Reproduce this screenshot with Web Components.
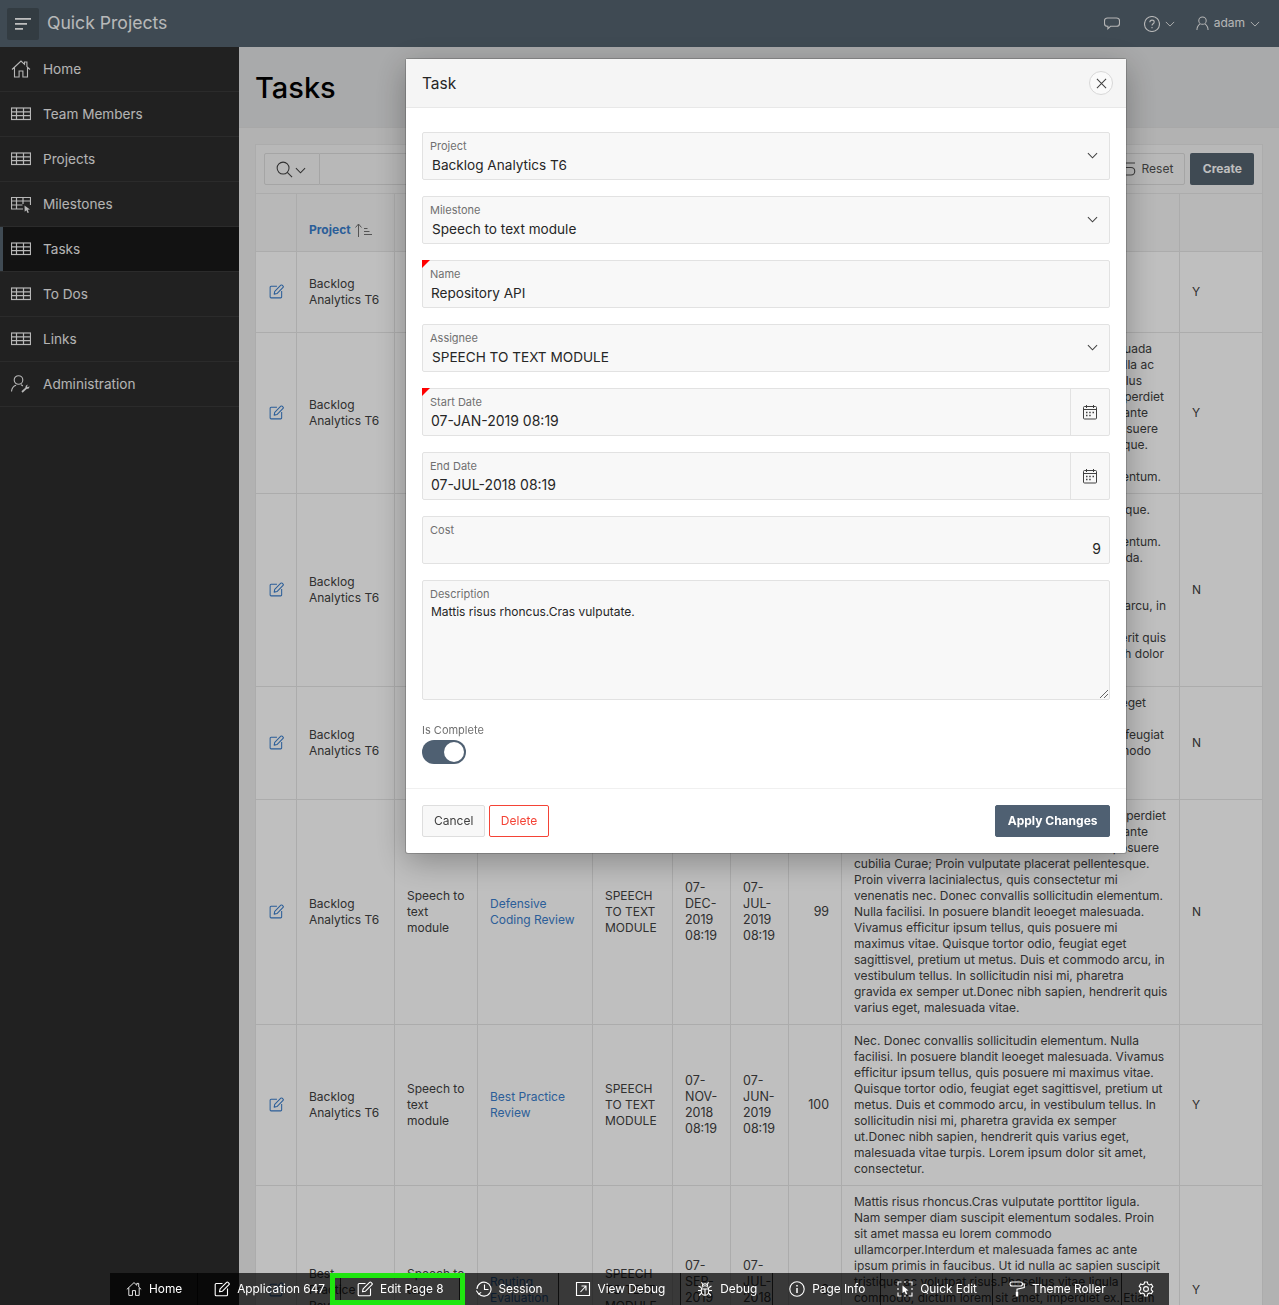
<!DOCTYPE html>
<html lang="en">
<head>
<meta charset="utf-8">
<title>Quick Projects</title>
<style>
  html, body { margin: 0; height: 100%; overflow: hidden; }
  body { font-family: Inter, "Liberation Sans", sans-serif; font-size: 13px; color: #404040; }
</style>
</head>
<body>
<qp-app>
  <qp-header slot="header" title="Quick Projects" user="adam"></qp-header>
  <qp-sidebar slot="side">
    <qp-nav icon="home">Home</qp-nav>
    <qp-nav icon="table">Team Members</qp-nav>
    <qp-nav icon="table">Projects</qp-nav>
    <qp-nav icon="tablecursor">Milestones</qp-nav>
    <qp-nav icon="table" active>Tasks</qp-nav>
    <qp-nav icon="table">To Dos</qp-nav>
    <qp-nav icon="table">Links</qp-nav>
    <qp-nav icon="admin">Administration</qp-nav>
  </qp-sidebar>
  <qp-title slot="main">Tasks</qp-title>
  <qp-report slot="main"></qp-report>
</qp-app>

<qp-dialog title="Task">
  <qp-field label="Project" kind="select" value="Backlog Analytics T6"></qp-field>
  <qp-field label="Milestone" kind="select" value="Speech to text module"></qp-field>
  <qp-field label="Name" value="Repository API" required></qp-field>
  <qp-field label="Assignee" kind="select" value="SPEECH TO TEXT MODULE"></qp-field>
  <qp-field label="Start Date" kind="date" value="07-JAN-2019 08:19" required></qp-field>
  <qp-field label="End Date" kind="date" value="07-JUL-2018 08:19"></qp-field>
  <qp-field label="Cost" kind="number" value="9"></qp-field>
  <qp-field label="Description" kind="textarea" value="Mattis risus rhoncus.Cras vulputate."></qp-field>
  <qp-switch label="Is Complete"></qp-switch>
  <qp-button slot="start">Cancel</qp-button>
  <qp-button slot="start" variant="danger">Delete</qp-button>
  <qp-button slot="end" variant="primary">Apply Changes</qp-button>
</qp-dialog>

<qp-devbar>
  <qp-devitem icon="home">Home</qp-devitem>
  <qp-devitem icon="edit">Application 647</qp-devitem>
  <qp-devitem icon="edit">Edit Page 8</qp-devitem>
  <qp-devitem icon="session">Session</qp-devitem>
  <qp-devitem icon="viewdebug">View Debug</qp-devitem>
  <qp-devitem icon="bug">Debug</qp-devitem>
  <qp-devitem icon="info">Page Info</qp-devitem>
  <qp-devitem icon="quickedit">Quick Edit</qp-devitem>
  <qp-devitem icon="roller">Theme Roller</qp-devitem>
  <qp-devitem icon="gear"></qp-devitem>
</qp-devbar>

<script>
const ICONS = {
  home: `<svg viewBox="0 0 20 20" fill="none" stroke="currentColor" stroke-width="1.1"><path d="M1 10.5 10 2l3.5 3.3V3h2.4v4.6L19 10.5M3.500 8.500V18h4.600v-6h3.800v6h4.600V8.500"/></svg>`,
  table: `<svg viewBox="0 0 20 20" fill="none" stroke="currentColor" stroke-width="1.2"><rect x=".5" y="4" width="19" height="11.500"/><path d="M.5 7.800h19M.5 11.600h19M5.500 4v11.500M12.500 4v11.500"/></svg>`,
  tablecursor: `<svg viewBox="0 0 20 20" fill="none" stroke="currentColor" stroke-width="1.2"><path d="M12 15H.5V3.500h19V11M.5 7h19M.5 11h11M5.500 3.500V15M12 3.500V10"/><path fill="currentColor" stroke="none" d="M13.500 11.500 19 15.500l-2.300.3 1.200 2.800-1.300.5-1.200-2.800-1.700 1.500z"/></svg>`,
  admin: `<svg viewBox="0 0 20 20" fill="none" stroke="currentColor" stroke-width="1.1"><circle cx="7.500" cy="6" r="4.300"/><path d="M.5 17.500c.3-3.600 2.400-5.700 4.600-6.300M10 10.800c.7.3 1.300.7 1.800 1.200"/><path stroke-width="1.700" d="M11 18l4.800-4.400"/><path fill="currentColor" stroke="none" d="M14.600 13.800c-.5-1.600.7-3.100 2.400-3l-1.200 1.500 1 1 1.600-1.100c.3 1.800-1.400 3.100-3.100 2.500z"/></svg>`,
  edit: `<svg viewBox="0 0 16 16" fill="none" stroke="currentColor" stroke-width="1.100" stroke-linejoin="round"><path d="M8.500 2.500H2.200c-.6 0-1 .4-1 1v10.300c0 .6.4 1 1 1h10.300c.6 0 1-.4 1-1V7.500"/><path d="M5.500 10.800l.6-3L12.600 1.300c.4-.4 1-.4 1.400 0l1 1c.4.4.4 1 0 1.400L8.500 10.200z"/></svg>`,
  session: `<svg viewBox="0 0 16 16" fill="none" stroke="currentColor" stroke-width="1.100"><path d="M2.600 12.600A7 7 0 1 0 1 8"/><path d="M8.500 3.500V8.500H12.500"/><path d="M.3 9.500l2.400 3.500 2.500-1.600"/></svg>`,
  viewdebug: `<svg viewBox="0 0 16 16" fill="none" stroke="currentColor" stroke-width="1.100"><path d="M1.500 1.500h13v13h-13zM5.500 11 11 5M6.500 5H11v4.500"/></svg>`,
  bug: `<svg viewBox="0 0 16 16" fill="none" stroke="currentColor" stroke-width="1.100"><ellipse cx="8" cy="9.500" rx="3.800" ry="4.800"/><path d="M5.300 5.300C5.500 3.500 6.500 2.800 8 2.800s2.500.7 2.700 2.500M4.200 8H11.800M8 8v6.300M5.800 3.500 4.500 1.200M10.200 3.500l1.300-2.300M4.200 6.500 1.500 5M11.800 6.500 14.500 5M4.200 9.500H1M11.800 9.500H15M4.700 12 2 14.500M11.300 12 14 14.500"/></svg>`,
  info: `<svg viewBox="0 0 16 16" fill="none" stroke="currentColor" stroke-width="1.100"><circle cx="8" cy="8" r="7.200"/><path stroke-width="1.500" d="M8 7v5M8 4v1.500"/></svg>`,
  quickedit: `<svg viewBox="0 0 16 16" fill="none" stroke="currentColor" stroke-width="1.100"><path d="M4.500 1H1v3.500M11.500 1H15v3.500M1 11.500V15h3.500M15 11.500V15h-3.500M7 1h2M1 7v2M15 7v2M7 15h2"/><path fill="currentColor" stroke="none" d="M5.500 4.500 11.500 9.500l-2.600.3 1.400 3-1.400.6-1.400-3-2 1.700z"/></svg>`,
  roller: `<svg viewBox="0 0 16 16" fill="none" stroke="currentColor" stroke-width="1.100"><rect x="1" y="1" width="12.500" height="4" rx="2"/><path d="M13.500 3H15.300V6.500L8 8.300v2.200"/><rect x="6.800" y="10.500" width="2.400" height="5" rx=".6" fill="currentColor" stroke="none"/></svg>`,
  gear: `<svg viewBox="0 0 16 16" fill="none" stroke="currentColor" stroke-width="1.100"><circle cx="8" cy="8" r="2.400"/><path d="M6.600 1h2.800l.4 2 1.600.9 2-.7 1.400 2.400-1.500 1.400v1.900l1.500 1.400-1.400 2.400-2-.7-1.600.9-.4 2.100H6.600l-.4-2.100-1.600-.9-2 .7L1.200 10.100l1.500-1.400V6.800L1.200 5.400l1.400-2.400 2 .7 1.600-.9z"/></svg>`,
  chevron: `<svg viewBox="0 0 12 12" fill="none" stroke="currentColor" stroke-width="1.100"><path d="M1 3.500 6 8.500 11 3.500"/></svg>`,
  search: `<svg viewBox="0 0 18 18" fill="none" stroke="currentColor" stroke-width="1.100"><circle cx="7.500" cy="7.500" r="6.300"/><path d="M12 12l5 5"/></svg>`,
  calendar: `<svg viewBox="0 0 16 16" fill="none" stroke="currentColor" stroke-width="1"><rect x="1.500" y="2.500" width="13" height="12.500" rx="1"/><path d="M1.500 5.500h13M4.500 1v3M11.500 1v3"/><path stroke-width="1.400" d="M4 8.500h1.500M7.200 8.500h1.500M10.500 8.500H12M4 11.500h1.500M7.200 11.500h1.500"/></svg>`,
  chat: `<svg viewBox="0 0 16 16" fill="none" stroke="currentColor" stroke-width="1.100"><path d="M3.500 2h9c1.500 0 3 1 3 2.800v2.700c0 1.700-1.500 2.800-3 2.800H6.500l-2.600 2.500v-2.500h-.4C2 10.300.5 9.200.5 7.500V4.800C.5 3 2 2 3.500 2z"/></svg>`,
  help: `<svg viewBox="0 0 16 16" fill="none" stroke="currentColor" stroke-width="1.100"><circle cx="8" cy="8" r="7.500"/><path d="M5.800 6.200C5.900 4.800 6.900 4.100 8 4.100c1.300 0 2.200.8 2.200 1.900 0 1.800-2.200 1.700-2.200 3.500M8 11v1.300"/></svg>`,
  user: `<svg viewBox="0 0 14 16" fill="none" stroke="currentColor" stroke-width="1.100"><circle cx="7" cy="5" r="4"/><path d="M1 15c0-3 1.300-5 3.500-6.500M13 15c0-3-1.300-5-3.500-6.500"/></svg>`,
  close: `<svg viewBox="0 0 12 12" fill="none" stroke="currentColor" stroke-width="1.100"><path d="M1 1l10 10M11 1 1 11"/></svg>`,
  menu: `<svg viewBox="0 0 16 12" fill="none" stroke="currentColor" stroke-width="1.800"><path d="M0 .8h16M0 5.800h12M0 10.800h8"/></svg>`,
  reset: `<svg viewBox="0 0 16 16" fill="none" stroke="currentColor" stroke-width="1.100"><path d="M15 2H6L1 6.500l4.500 3.500M1 6.500h10c5 0 5 7.500 0 7.500H4"/></svg>`,
  sortup: `<svg viewBox="0 0 17 14" fill="none" stroke="currentColor" stroke-width="1"><path d="M3.500 14V1M.5 4.500 3.500 1l3 3.500M9 5.500h3.500M9 8.500h5.500M9 11.500h8"/></svg>`
};

class QpApp extends HTMLElement {
  connectedCallback() {
    this.attachShadow({ mode: "open" }).innerHTML = `
      <style>
        :host { display: grid; grid-template-columns: 239px 1fr; grid-template-rows: 47px 1fr; height: 1305px; overflow: hidden; background: #eeeeee; }
        .head { grid-column: 1 / 3; }
        .side { background: #2d2d2d; }
        .main { min-width: 0; min-height: 0; overflow: hidden; }
      </style>
      <div class="head"><slot name="header"></slot></div>
      <div class="side"><slot name="side"></slot></div>
      <div class="main"><slot name="main"></slot></div>
    `;
  }
}

class QpHeader extends HTMLElement {
  connectedCallback() {
    this.attachShadow({ mode: "open" }).innerHTML = `
      <style>
        :host { display: flex; align-items: center; height: 47px; background: #54636f; color: #fff; padding-left: 7px; padding-right: 19px; box-sizing: border-box; }
        .burger { width: 32px; height: 32px; background: #445059; border-radius: 2px; display: flex; align-items: center; justify-content: center; }
        .burger svg { width: 16px; height: 12px; display: block; }
        .title { margin-left: 8px; font-size: 17.6px; color: #fff; opacity: .95; flex: 1; padding-bottom: 2px; }
        .act { display: flex; align-items: center; color: #f2f2f2; font-size: 12px; line-height: 14px; }
        .act svg { display: block; }
        .i16 { width: 16px; height: 16px; }
        .ch { width: 10px; height: 10px; margin-left: 5px; }
        .u { width: 13px; height: 15px; margin-right: 5px; }
        .name { padding-bottom: 2px; }
      </style>
      <div class="burger">${ICONS.menu}</div>
      <div class="title">${this.getAttribute("title")}</div>
      <div class="act" style="margin-right:24px"><span class="i16">${ICONS.chat}</span></div>
      <div class="act" style="margin-right:21px"><span class="i16">${ICONS.help}</span><span class="ch">${ICONS.chevron}</span></div>
      <div class="act"><span class="u">${ICONS.user}</span><span class="name">${this.getAttribute("user")}</span><span class="ch">${ICONS.chevron}</span></div>
    `;
  }
}

class QpSidebar extends HTMLElement {
  connectedCallback() {
    this.attachShadow({ mode: "open" }).innerHTML = `
      <style>:host { display: block; }</style><slot></slot>
    `;
  }
}

class QpNav extends HTMLElement {
  connectedCallback() {
    const active = this.hasAttribute("active");
    this.attachShadow({ mode: "open" }).innerHTML = `
      <style>
        :host { display: flex; align-items: center; height: 45px; box-sizing: border-box; padding-left: 11px; gap: 12px; font-size: 13.6px; color: #f0f0f0; border-bottom: 1px solid #3a3a3a; position: relative; background: ${active ? "#181818" : "transparent"}; }
        .ic { width: 20px; height: 20px; display: block; color: #f4f4f4; }
        .t { padding-bottom: 1px; }
        .bar { display: ${active ? "block" : "none"}; position: absolute; left: 0; top: 0; bottom: 0; width: 3px; background: #54636f; }
      </style>
      <span class="bar"></span>
      <span class="ic">${ICONS[this.getAttribute("icon")]}</span>
      <span class="t"><slot></slot></span>
    `;
  }
}

class QpTitle extends HTMLElement {
  connectedCallback() {
    this.attachShadow({ mode: "open" }).innerHTML = `
      <style>
        :host { display: flex; align-items: center; height: 81px; padding: 1px 0 0 16px; box-sizing: border-box; background: #e2e3e4; border-bottom: 1px solid #e0e0e0; font-size: 29px; font-weight: 500; color: #000; }
      </style>
      <slot></slot>
    `;
  }
}

// lines in the rows behind the dialog: [x end relative to the column text, text]
const ROWS = [
  { project: "Backlog Analytics T6", ms: "Speech to text module", name: "Repository API", from: "07-JAN-2019 08:19", to: "07-JUL-2018 08:19", cost: 9, done: "Y",
    desc: ["Mattis risus rhoncus.Cras vulputate.", "", "", ""] },
  { project: "Backlog Analytics T6", ms: "Speech to text module", name: "Code Quality Review", from: "07-FEB-2019 08:19", to: "07-AUG-2018 08:19", cost: 12, done: "Y",
    desc: [[298, "Interdum et malesuada fames ac ante et malesuada"], [300, "ipsum primis in faucibus. Ut id nulla nulla ac"], [288, "Phasellus vitae ligula commodo cursus tellus"], [310, "sit amet, dictum lorem sit amet, imperdiet"], [294, "Etiam mattis sem at fames ac ipsum ante"], [304, "blandit vestibulum in nulla posuere"], [294, "Curae; Proin vulputate placerat pellentesque."], "", [307, "Donec convallis sollicitudin elementum."]] },
  { project: "Backlog Analytics T6", ms: "Speech to text module", name: "Security Testing", from: "07-MAR-2019 08:19", to: "07-SEP-2018 08:19", cost: 30, done: "N",
    desc: [[296, "Curae; Proin vulputate placerat pellentesque."], "", [307, "Donec convallis sollicitudin elementum."], [289, "In posuere blandit leoeget malesuada."], "", "", [312, "Duis et commodo arcu, in"], "", [312, "ipsum dolor sapien, hendrerit quis"], [310, "ut.Donec nibh dolor"], ""] },
  { project: "Backlog Analytics T6", ms: "Speech to text module", name: "Load Testing", from: "07-APR-2019 08:19", to: "07-OCT-2018 08:19", cost: 45, done: "N",
    desc: [[292, "Quisque tortor odio, feugiat eget"], "", [310, "Quisque tortor odio, nec feugiat"], [297, "Duis et commodo"], "", ""] },
  { project: "Backlog Analytics T6", ms: "Speech to text module", name: "Defensive Coding Review", from: "07-DEC-2019 08:19", to: "07-JUL-2019 08:19", cost: 99, done: "N",
    desc: [[312, "sit amet, dictum lorem sit amet, imperdiet"], [294, "Etiam mattis sem at fames ac ipsum ante"], [305, "blandit vestibulum in nulla posuere"],
      "cubilia Curae; Proin vulputate placerat pellentesque.", "Proin viverra lacinialectus, quis consectetur mi", "venenatis nec. Donec convallis sollicitudin elementum.", "Nulla facilisi. In posuere blandit leoeget malesuada.", "Vivamus efficitur ipsum tellus, quis posuere mi", "maximus vitae. Quisque tortor odio, feugiat eget", "sagittisvel, pretium ut metus. Duis et commodo arcu, in", "vestibulum tellus. In sollicitudin nisi mi, pharetra", "gravida ex semper ut.Donec nibh sapien, hendrerit quis", "varius eget, malesuada vitae."] },
  { project: "Backlog Analytics T6", ms: "Speech to text module", name: "Best Practice Review", from: "07-NOV-2018 08:19", to: "07-JUN-2019 08:19", cost: 100, done: "Y",
    desc: ["Nec. Donec convallis sollicitudin elementum. Nulla", "facilisi. In posuere blandit leoeget malesuada. Vivamus", "efficitur ipsum tellus, quis posuere mi maximus vitae.", "Quisque tortor odio, feugiat eget sagittisvel, pretium ut", "metus. Duis et commodo arcu, in vestibulum tellus. In", "sollicitudin nisi mi, pharetra gravida ex semper", "ut.Donec nibh sapien, hendrerit quis varius eget,", "malesuada vitae turpis. Lorem ipsum dolor sit amet,", "consectetur."] },
  { project: "Best Practice Review", ms: "Speech to text module", name: "Routing Evaluation", from: "07-SEP-2019 08:19", to: "07-JUL-2018 08:19", cost: 9, done: "Y",
    desc: ["Mattis risus rhoncus.Cras vulputate porttitor ligula.", "Nam semper diam suscipit elementum sodales. Proin", "sit amet massa eu lorem commodo", "ullamcorper.Interdum et malesuada fames ac ante", "ipsum primis in faucibus. Ut id nulla ac sapien suscipit", "tristique ac volutpat risus.Phasellus vitae ligula", "commodo, dictum lorem sit amet, imperdiet ex. Etiam", "", "", "", "", ""] }
];

class QpReport extends HTMLElement {
  connectedCallback() {
    const line = l => {
      if (!l) return `<div class="l">&nbsp;</div>`;
      if (Array.isArray(l)) return `<div class="l tail" style="width:${l[0]}px"><span>${l[1]}</span></div>`;
      return `<div class="l">${l}</div>`;
    };
    const rows = ROWS.map(r => `
      <tr>
        <td class="e">${ICONS.edit}</td>
        <td>${r.project}</td>
        <td>${r.ms}</td>
        <td class="lnk">${r.name}</td>
        <td>SPEECH TO TEXT MODULE</td>
        <td class="d">${r.from}</td>
        <td class="d">${r.to}</td>
        <td class="n">${r.cost}</td>
        <td>${r.desc.map(line).join("")}</td>
        <td>${r.done}</td>
      </tr>`).join("");
    this.attachShadow({ mode: "open" }).innerHTML = `
      <style>
        :host { display: block; margin: 16px 16px 0; background: #fff; border: 1px solid #e6e6e6; border-bottom: 0; font-size: 12px; line-height: 16px; color: #404040; }
        .bar { display: flex; align-items: center; height: 49px; padding: 0 8px; box-sizing: border-box; background: #f6f6f6; border-bottom: 1px solid #e6e6e6; }
        .sbtn { width: 56px; height: 32px; box-sizing: border-box; border: 1px solid #dcdcdc; border-radius: 2px 0 0 2px; display: flex; align-items: center; gap: 2px; padding-left: 11px; color: #404040; }
        .sbtn .s { width: 17px; height: 17px; }
        .sbtn .c { width: 11px; height: 11px; }
        .inp { flex: 1; height: 32px; box-sizing: border-box; border: 1px solid #dcdcdc; border-left: 0; }
        .reset { display: flex; align-items: center; gap: 6px; height: 32px; padding: 0 11px 0 10px; margin-left: 8px; box-sizing: border-box; border: 1px solid #dcdcdc; border-radius: 2px; background: #f6f6f6; color: #505050; }
        .reset span { width: 16px; height: 16px; }
        .create { display: flex; align-items: center; height: 32px; padding: 0 12px 0 12.5px; margin-left: 5px; box-sizing: border-box; border-radius: 2px; background: #54636f; color: #fff; font-weight: 700; }
        table { width: 100%; table-layout: fixed; border-collapse: separate; border-spacing: 0; background: #fff; }
        th, td { padding: 8px 12px; border-left: 1px solid #e6e6e6; border-bottom: 1px solid #e6e6e6; text-align: left; vertical-align: middle; box-sizing: border-box; overflow: visible; }
        th:first-child, td:first-child { border-left: 0; }
        th { height: 58px; background: #f6f6f6; font-weight: 700; vertical-align: bottom; padding-bottom: 13px; }
        th a { color: #3a7ecc; }
        th svg { width: 17px; height: 14px; vertical-align: -3px; margin-left: 4px; color: #707070; }
        .e { padding: 0; text-align: center; color: #3a7ecc; }
        .e svg { width: 15px; height: 15px; display: block; margin: -2px auto 0 12.5px; }
        .lnk { color: #3a7ecc; }
        .n { text-align: right; font-size: 12.4px; }
        .d { font-size: 12.5px; padding-right: 0; }
        .l { white-space: nowrap; height: 16px; }
        .tail { display: flex; justify-content: flex-end; }
        .tail span { flex: none; }
      </style>
      <div class="bar">
        <div class="sbtn"><span class="s">${ICONS.search}</span><span class="c">${ICONS.chevron}</span></div>
        <div class="inp"></div>
        <div class="reset"><span>${ICONS.reset}</span>Reset</div>
        <div class="create">Create</div>
      </div>
      <table>
        <colgroup><col style="width:40px"><col style="width:98px"><col style="width:83px"><col style="width:115px"><col style="width:80px"><col style="width:58px"><col style="width:58px"><col style="width:53px"><col style="width:338px"><col></colgroup>
        <tr><th></th><th><a>Project</a>${ICONS.sortup}</th><th>Milestone</th><th>Name</th><th>Assignee</th><th>Start Date</th><th>End Date</th><th>Cost</th><th>Description</th><th></th></tr>
        ${rows}
      </table>
    `;
  }
}

class QpDialog extends HTMLElement {
  connectedCallback() {
    this.attachShadow({ mode: "open" }).innerHTML = `
      <style>
        :host { display: block; position: fixed; inset: 0; background: rgba(0,0,0,.25); z-index: 10; }
        .box { position: absolute; left: 406px; top: 59px; width: 720px; height: 794px; display: flex; flex-direction: column; background: #fff; border-radius: 2px; box-shadow: 0 0 0 1px rgba(0,0,0,.18), 0 8px 32px rgba(0,0,0,.3); }
        header { display: flex; align-items: center; justify-content: space-between; height: 49px; flex: none; box-sizing: border-box; padding: 0 13px 0 16px; background: #f5f5f5; border-bottom: 1px solid #e8e8e8; font-size: 15.5px; color: #262626; }
        .x { width: 24px; height: 24px; box-sizing: border-box; border: 1px solid #d8d8d8; border-radius: 50%; background: #fafafa; color: #404040; display: flex; align-items: center; justify-content: center; }
        .x svg { width: 11px; height: 11px; display: block; }
        .body { flex: 1; display: flex; flex-direction: column; gap: 16px; padding: 24px 16px 0; }
        footer { display: flex; justify-content: space-between; flex: none; height: 65px; box-sizing: border-box; padding: 16px; border-top: 1px solid #f0f0f0; }
        .g { display: flex; gap: 4px; }
      </style>
      <div class="box">
        <header>${this.getAttribute("title")}<span class="x">${ICONS.close}</span></header>
        <div class="body"><slot></slot></div>
        <footer><div class="g"><slot name="start"></slot></div><div class="g"><slot name="end"></slot></div></footer>
      </div>
    `;
  }
}

class QpField extends HTMLElement {
  connectedCallback() {
    const kind = this.getAttribute("kind") || "text";
    const right = kind === "select"
      ? `<span class="chev">${ICONS.chevron}</span>`
      : kind === "date" ? `<span class="cal">${ICONS.calendar}</span>` : "";
    this.attachShadow({ mode: "open" }).innerHTML = `
      <style>
        :host { display: flex; position: relative; height: ${kind === "textarea" ? 120 : 48}px; box-sizing: border-box; background: #f8f8f8; border: 1px solid #e2e2e2; border-radius: 2px; color: #262626; }
        .in { flex: 1; min-width: 0; padding: 6px 8px 0 7px; }
        label { display: block; font-size: 11px; line-height: 14px; color: #707070; }
        .v { font-size: 13.6px; line-height: 20px; margin-top: 2px; padding-left: ${kind === "select" ? 2 : 1}px; }
        :host([kind=date]) .v { font-size: 14px; }
        :host([kind=number]) .v { text-align: right; font-size: 14px; }
        :host([kind=textarea]) .v { font-size: 12px; line-height: 16px; margin-top: 3px; }
        .chev { position: absolute; right: 11px; top: 17px; width: 11px; height: 11px; color: #404040; }
        .cal { flex: none; width: 38px; border-left: 1px solid #e2e2e2; color: #404040; display: flex; align-items: center; justify-content: center; }
        .cal svg { width: 16px; height: 16px; }
        .req { position: absolute; left: -1px; top: -1px; width: 0; height: 0; border-style: solid; border-width: 8px 8px 0 0; border-color: #ff0000 transparent transparent transparent; }
        .grip { position: absolute; right: 1px; bottom: 1px; width: 8px; height: 8px; color: #666; }
        svg { display: block; }
      </style>
      ${this.hasAttribute("required") ? `<span class="req"></span>` : ""}
      <div class="in"><label>${this.getAttribute("label")}</label><div class="v">${this.getAttribute("value")}</div></div>
      ${right}
      ${kind === "textarea" ? `<svg class="grip" viewBox="0 0 8 8" stroke="currentColor" fill="none"><path d="M0 8 8 0M4 8l4-4"/></svg>` : ""}
    `;
  }
}

class QpSwitch extends HTMLElement {
  connectedCallback() {
    this.attachShadow({ mode: "open" }).innerHTML = `
      <style>
        :host { display: block; margin-top: 7px; }
        label { display: block; font-size: 11px; line-height: 14px; color: #707070; margin-bottom: 3px; }
        .t { display: flex; justify-content: flex-end; align-items: center; width: 44px; height: 24px; box-sizing: border-box; padding-right: 2px; border-radius: 12px; background: #4f6072; }
        .k { width: 20px; height: 20px; border-radius: 50%; background: #fff; }
      </style>
      <label>${this.getAttribute("label")}</label>
      <div class="t"><span class="k"></span></div>
    `;
  }
}

class QpButton extends HTMLElement {
  connectedCallback() {
    const v = this.getAttribute("variant");
    const look = v === "primary" ? "background:#4f6072;border-color:#4f6072;color:#fff;font-weight:700;padding:0 11.5px;"
      : v === "danger" ? "background:#fff;border-color:#f44336;color:#f44336;padding:0 10.5px;"
      : "background:#f8f8f8;border-color:#dedede;color:#404040;padding:0 11px;";
    this.attachShadow({ mode: "open" }).innerHTML = `
      <style>
        :host { display: flex; align-items: center; height: 32px; box-sizing: border-box; border: 1px solid; border-radius: 2px; font-size: 12px; ${look} }
        span { padding-bottom: 2px; }
      </style>
      <span><slot></slot></span>
    `;
  }
}

class QpDevbar extends HTMLElement {
  connectedCallback() {
    this.attachShadow({ mode: "open" }).innerHTML = `
      <style>
        :host { display: flex; position: fixed; left: 110px; bottom: 0; height: 32px; background: rgba(0,0,0,.7); z-index: 20; color: #fff; font-size: 11.85px; }
        .mark { position: absolute; left: 220px; top: 0; width: 135px; height: 32px; box-sizing: border-box; border: 5px solid #1fe60f; }
      </style>
      <slot></slot>
      <span class="mark"></span>
    `;
  }
}

class QpDevitem extends HTMLElement {
  connectedCallback() {
    const label = this.textContent.trim();
    this.attachShadow({ mode: "open" }).innerHTML = `
      <style>
        :host { display: flex; align-items: center; gap: 7px; padding: 0 15px 0 16px; border-right: 1px solid rgba(0,0,0,.75); }
        :host(:last-child) { border-right: 0; }
        span { display: block; width: 16px; height: 16px; }
        svg { display: block; }
      </style>
      <span>${ICONS[this.getAttribute("icon")]}</span>
      ${label ? "<slot></slot>" : ""}
    `;
  }
}

customElements.define("qp-app", QpApp);
customElements.define("qp-header", QpHeader);
customElements.define("qp-sidebar", QpSidebar);
customElements.define("qp-nav", QpNav);
customElements.define("qp-title", QpTitle);
customElements.define("qp-report", QpReport);
customElements.define("qp-dialog", QpDialog);
customElements.define("qp-field", QpField);
customElements.define("qp-switch", QpSwitch);
customElements.define("qp-button", QpButton);
customElements.define("qp-devbar", QpDevbar);
customElements.define("qp-devitem", QpDevitem);
</script>
</body>
</html>
